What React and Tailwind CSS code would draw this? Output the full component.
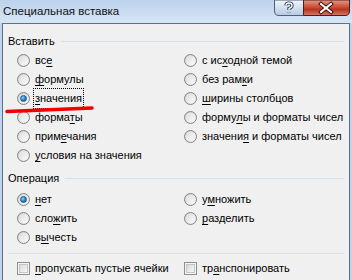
import React from 'react';

const font = { fontFamily: '"Liberation Sans", Arial, sans-serif' };

// label with one underlined accelerator letter
function Acc({ text, at }) {
  return (
    <span>
      {text.slice(0, at)}
      <span className="underline underline-offset-[2px]">{text[at]}</span>
      {text.slice(at + 1)}
    </span>
  );
}

function Radio({ checked }) {
  return (
    <span className="relative flex h-[13px] w-[13px] shrink-0 items-center justify-center rounded-full border border-[#858585] bg-gradient-to-br from-[#cfcfcf] to-[#f6f6f6]">
      <span className="h-[9px] w-[9px] rounded-full bg-gradient-to-br from-[#dedede] to-[#fafafa]">
        {checked && (
          <span className="m-[1px] block h-[7px] w-[7px] rounded-full border border-[#1d5c8f] bg-[radial-gradient(circle_at_35%_35%,#8fd0ff,#1b7ac4_60%,#0e4d86)]" />
        )}
      </span>
    </span>
  );
}

function Check() {
  return (
    <span className="flex h-[13px] w-[13px] shrink-0 items-center justify-center border border-[#8e8f8f] bg-[#f4f4f4]">
      <span className="h-[9px] w-[9px] border border-[#c6c6c6] bg-gradient-to-br from-[#d9d9d9] to-[#f7f7f7]" />
    </span>
  );
}

function Row({ children, checked, focus }) {
  return (
    <div className="flex h-[19px] items-center gap-[5px] pl-[9px]">
      <Radio checked={checked} />
      {focus ? (
        <span className="-ml-[1px] px-[1px] py-[1px] outline outline-1 outline-dotted outline-black">{children}</span>
      ) : (
        children
      )}
    </div>
  );
}

function Header({ title }) {
  return (
    <div className="flex h-[14px] items-center">
      <span>{title}</span>
      <span className="ml-[6px] h-px flex-1 bg-[#d5dfe5]" />
    </div>
  );
}

// window caption buttons (help + close)
function CaptionButtons() {
  return (
    <svg width="76" height="16" viewBox="0 0 76 16" className="block">
      <defs>
        <linearGradient id="hb" x1="0" y1="0" x2="0" y2="1">
          <stop offset="0" stopColor="#f0f5fb" />
          <stop offset="0.5" stopColor="#d2e0ef" />
          <stop offset="1" stopColor="#b6cae3" />
        </linearGradient>
        <linearGradient id="cb" x1="0" y1="0" x2="0" y2="1">
          <stop offset="0" stopColor="#e69888" />
          <stop offset="0.5" stopColor="#c8472f" />
          <stop offset="0.6" stopColor="#b8331f" />
          <stop offset="1" stopColor="#d77a66" />
        </linearGradient>
      </defs>
      <path d="M0.5 0 V11 Q0.5 15.5 5 15.5 H29.5 V0 Z" fill="url(#hb)" stroke="#4f5f75" />
      <path d="M29.5 0 V15.5 H71 Q75.5 15.5 75.5 11 V0 Z" fill="url(#cb)" stroke="#4a1e1a" />
      <path d="M47 4 L57 12 M57 4 L47 12" stroke="#3a0e08" strokeWidth="4" strokeLinecap="square" />
      <path d="M47 4 L57 12 M57 4 L47 12" stroke="#ffffff" strokeWidth="2" strokeLinecap="square" />
      <path d="M12 5.5 Q12 3 15 3 Q18 3 18 5.5 Q18 7.5 15 8.5 V10 M15 12 V12.5" stroke="#2a3441" strokeWidth="3.2" fill="none" />
      <path d="M12 5.5 Q12 3 15 3 Q18 3 18 5.5 Q18 7.5 15 8.5 V10 M15 12 V12.5" stroke="#ffffff" strokeWidth="1.4" fill="none" />
    </svg>
  );
}

export default function App() {
  return (
    <div className="relative flex h-[280px] w-[352px] flex-col overflow-hidden bg-[#bfd5ee] text-[11px] text-black" style={font}>
      {/* title bar */}
      <div className="flex h-[23px] shrink-0 items-start bg-gradient-to-b from-[#bcd2ec] to-[#d7e6f5]">
        <span className="ml-[3px] mt-[3px] text-[11.5px] leading-[16px] text-[#111]">Специальная вставка</span>
        <div className="ml-auto mr-[2px]">
          <CaptionButtons />
        </div>
      </div>

      {/* dialog body */}
      <div className="ml-[2px] mr-[2px] flex flex-1 flex-col border-l border-r border-t border-[#5e7088] bg-[#f0f0f0] pl-[5px] pr-[5px]">
        <div className="mt-[10px]">
          <Header title="Вставить" />
        </div>
        <div className="mt-[3px] grid grid-cols-[167px_1fr]">
          <div className="flex flex-col">
            <Row><Acc text="все" at={2} /></Row>
            <Row><Acc text="формулы" at={0} /></Row>
            <Row checked focus><Acc text="значения" at={0} /></Row>
            <Row><Acc text="форматы" at={5} /></Row>
            <Row><Acc text="примечания" at={4} /></Row>
            <Row><Acc text="условия на значения" at={0} /></Row>
          </div>
          <div className="flex flex-col">
            <Row><Acc text="с исходной темой" at={4} /></Row>
            <Row><Acc text="без рамки" at={7} /></Row>
            <Row><Acc text="ширины столбцов" at={0} /></Row>
            <Row><Acc text="формулы и форматы чисел" at={5} /></Row>
            <Row><Acc text="значения и форматы чисел" at={7} /></Row>
          </div>
        </div>

        <div className="mt-[6px]">
          <Header title="Операция" />
        </div>
        <div className="mt-[5px] grid grid-cols-[167px_1fr]">
          <div className="flex flex-col">
            <Row checked><Acc text="нет" at={0} /></Row>
            <Row><Acc text="сложить" at={3} /></Row>
            <Row><Acc text="вычесть" at={1} /></Row>
          </div>
          <div className="flex flex-col">
            <Row><Acc text="умножить" at={1} /></Row>
            <Row><Acc text="разделить" at={0} /></Row>
          </div>
        </div>

        <div className="mt-[6px] h-px bg-[#d5dfe5]" />
        <div className="mt-[5px] grid grid-cols-[167px_1fr]">
          <div className="flex h-[19px] items-center gap-[5px] pl-[9px]">
            <Check />
            <Acc text="пропускать пустые ячейки" at={0} />
          </div>
          <div className="flex h-[19px] items-center gap-[5px] pl-[9px]">
            <Check />
            <Acc text="транспонировать" at={2} />
          </div>
        </div>
      </div>

      {/* red hand-drawn mark */}
      <svg className="absolute left-0 top-0" width="352" height="280">
        <path d="M7 111.5 C30 110.5 60 109.5 92 108" stroke="#f00000" strokeWidth="3.5" fill="none" strokeLinecap="round" />
      </svg>
    </div>
  );
}
